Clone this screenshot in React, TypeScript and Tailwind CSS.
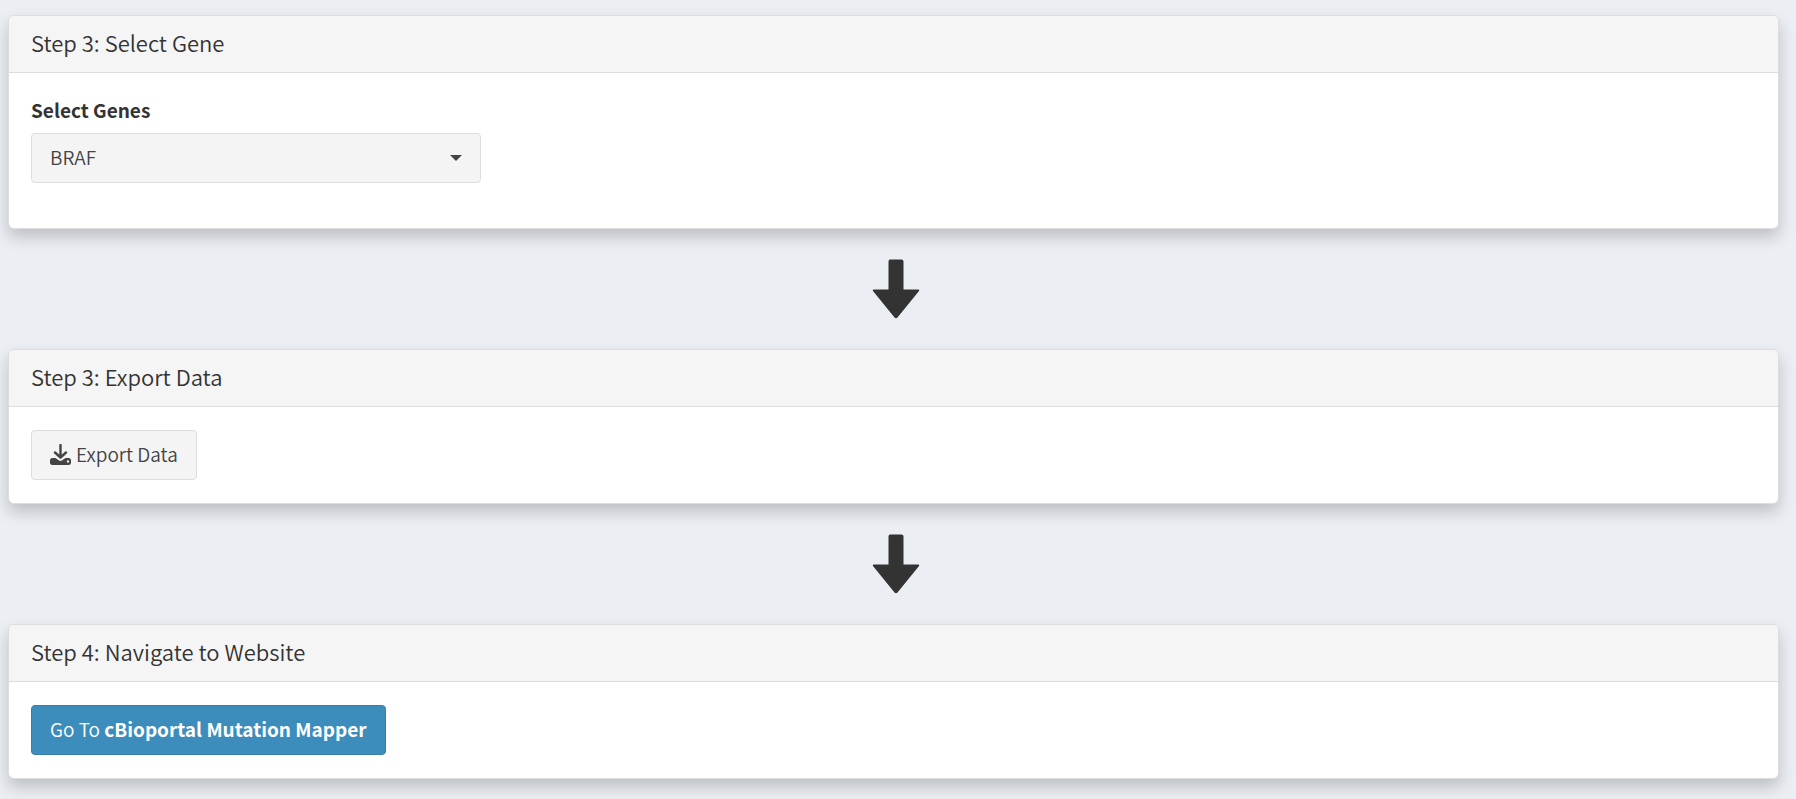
import type { ReactNode } from "react";

function Panel({ title, children }: { title: string; children: ReactNode }) {
  return (
    <section className="overflow-hidden rounded-md border border-[#dddddd] bg-white shadow-[0_8px_16px_0_rgba(0,0,0,0.2)]">
      <header className="border-b border-[#dddddd] bg-[#f5f5f5] px-[22px] pb-4 pt-3">
        <h3 className="text-[22px] font-[350] leading-[28px] text-[#333333]">{title}</h3>
      </header>
      <div className="px-[22px] py-[23px]">{children}</div>
    </section>
  );
}

function DownArrow() {
  return (
    <div className="flex h-[120px] items-center justify-center pl-[5px]">
      <svg width="48" height="60" viewBox="0 0 48 60" fill="#333333" aria-hidden="true">
        <path d="M18 0.5H29.5Q31.5 0.5 31.5 2.5V30.5H46.5Q47.8 30.5 47 32L25.5 58.5Q24 60 22.5 58.5L1 32Q0.2 30.5 1.5 30.5H16.5V2.5Q16.5 0.5 18 0.5Z" />
      </svg>
    </div>
  );
}

export default function App() {
  return (
    <main className="min-h-screen bg-[#ebeef3] pb-[19px] pl-2 pr-[17px] pt-[15px] font-['Noto_Sans_CJK_JP','Noto_Sans',sans-serif] text-[19px] leading-[26px] text-[#333333]">
      <Panel title="Step 3: Select Gene">
        <div className="flex flex-col pb-[22px] pt-px">
          <label htmlFor="gene" className="mb-[10px] self-start font-bold">
            Select Genes
          </label>
          <div className="relative w-full max-w-[450px]">
            <select
              id="gene"
              className="block h-[50px] w-full appearance-none rounded border border-[#dddddd] bg-[#f4f4f4] px-[18px] pb-[2px] text-[19px] font-[350] text-[#444444]"
            >
              <option>BRAF</option>
            </select>
            <svg
              className="pointer-events-none absolute right-[19px] top-[22px]"
              width="12"
              height="6"
              viewBox="0 0 12 6"
              fill="#444444"
              aria-hidden="true"
            >
              <path d="M0 0H12L6 6Z" />
            </svg>
          </div>
        </div>
      </Panel>
      <DownArrow />
      <Panel title="Step 3: Export Data">
        <button
          type="button"
          className="flex h-[50px] items-center gap-[5px] rounded border border-[#dddddd] bg-[#f4f4f4] px-[18px] pb-[2px] font-[350] text-[#444444]"
        >
          <svg width="21" height="21" viewBox="0 0 21 21" aria-hidden="true">
            <path d="M10.5 1V13.5M5 8.5L10.5 13.5L16 8.5" fill="none" stroke="#444444" strokeWidth="2.4" strokeLinecap="round" strokeLinejoin="round" />
            <path fillRule="evenodd" fill="#444444" d="M2.5 14H5.5L8.7 16.3Q10.5 17.5 12.3 16.3L15.5 14H18.5Q21 14 21 16.5V18.5Q21 21 18.5 21H2.5Q0 21 0 18.5V16.5Q0 14 2.5 14ZM18 16.2A1.2 1.2 0 1 0 18 18.6A1.2 1.2 0 1 0 18 16.2Z" />
          </svg>
          Export Data
        </button>
      </Panel>
      <DownArrow />
      <Panel title="Step 4: Navigate to Website">
        <a
          href="#mutation-mapper"
          className="inline-flex h-[50px] items-center whitespace-pre rounded border border-[#367fa9] bg-[#3c8dbc] px-[18px] pb-[2px] align-top font-[350] text-white"
        >
          Go To <b className="font-bold">cBioportal Mutation Mapper</b>
        </a>
      </Panel>
    </main>
  );
}
